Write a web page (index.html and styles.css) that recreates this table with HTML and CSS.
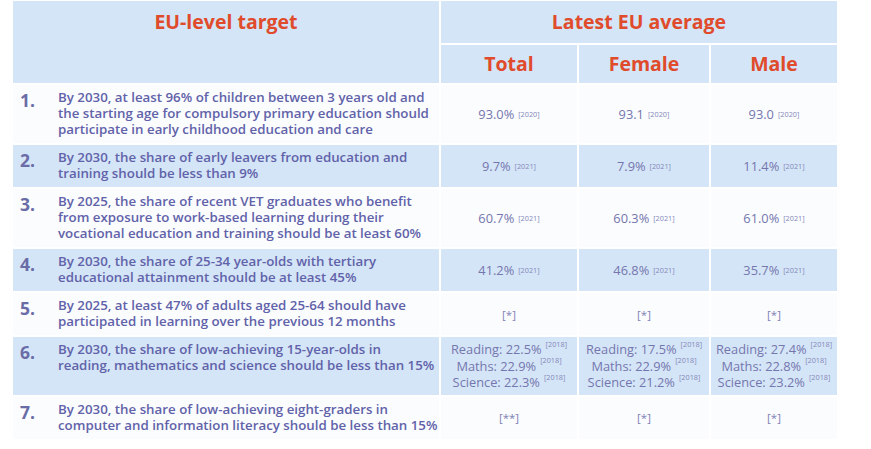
FILE: index.html
```html
<!DOCTYPE html>
<html lang="en">
<head>
<meta charset="utf-8">
<title>EU-level targets</title>
<link rel="stylesheet" href="styles.css">
</head>
<body>
<div class="table">
  <div class="hcell h-target">EU-level target</div>
  <div class="hcell h-avg">Latest EU average</div>
  <div class="hcell h-sub">Total</div>
  <div class="hcell h-sub">Female</div>
  <div class="hcell h-sub">Male</div>

  <div class="cell target"><span class="num">1.</span><span class="txt">By 2030, at least 96% of children between 3 years old and<br>the starting age for compulsory primary education should<br>participate in early childhood education and care</span></div>
  <div class="cell val">93.0%<sup class="yr">[2020]</sup></div>
  <div class="cell val">93.1<sup class="yr">[2020]</sup></div>
  <div class="cell val">93.0<sup class="yr">[2020]</sup></div>

  <div class="cell target blue"><span class="num">2.</span><span class="txt">By 2030, the share of early leavers from education and<br>training should be less than 9%</span></div>
  <div class="cell val blue">9.7%<sup class="yr">[2021]</sup></div>
  <div class="cell val blue">7.9%<sup class="yr">[2021]</sup></div>
  <div class="cell val blue">11.4%<sup class="yr">[2021]</sup></div>

  <div class="cell target"><span class="num">3.</span><span class="txt">By 2025, the share of recent VET graduates who benefit<br>from exposure to work-based learning during their<br>vocational education and training should be at least 60%</span></div>
  <div class="cell val">60.7%<sup class="yr">[2021]</sup></div>
  <div class="cell val">60.3%<sup class="yr">[2021]</sup></div>
  <div class="cell val">61.0%<sup class="yr">[2021]</sup></div>

  <div class="cell target blue"><span class="num">4.</span><span class="txt">By 2030, the share of 25-34 year-olds with tertiary<br>educational attainment should be at least 45%</span></div>
  <div class="cell val blue">41.2%<sup class="yr">[2021]</sup></div>
  <div class="cell val blue">46.8%<sup class="yr">[2021]</sup></div>
  <div class="cell val blue">35.7%<sup class="yr">[2021]</sup></div>

  <div class="cell target"><span class="num">5.</span><span class="txt">By 2025, at least 47% of adults aged 25-64 should have<br>participated in learning over the previous 12 months</span></div>
  <div class="cell val note">[*]</div>
  <div class="cell val note">[*]</div>
  <div class="cell val note">[*]</div>

  <div class="cell target blue"><span class="num">6.</span><span class="txt">By 2030, the share of low-achieving 15-year-olds in<br>reading, mathematics and science should be less than 15%</span></div>
  <div class="cell val blue multi"><span>Reading: 22.5%<sup class="yr">[2018]</sup></span><span>Maths: 22.9%<sup class="yr">[2018]</sup></span><span>Science: 22.3%<sup class="yr">[2018]</sup></span></div>
  <div class="cell val blue multi"><span>Reading: 17.5%<sup class="yr">[2018]</sup></span><span>Maths: 22.9%<sup class="yr">[2018]</sup></span><span>Science: 21.2%<sup class="yr">[2018]</sup></span></div>
  <div class="cell val blue multi"><span>Reading: 27.4%<sup class="yr">[2018]</sup></span><span>Maths: 22.8%<sup class="yr">[2018]</sup></span><span>Science: 23.2%<sup class="yr">[2018]</sup></span></div>

  <div class="cell target"><span class="num">7.</span><span class="txt">By 2030, the share of low-achieving eight-graders in<br>computer and information literacy should be less than 15%</span></div>
  <div class="cell val note">[**]</div>
  <div class="cell val note">[*]</div>
  <div class="cell val note">[*]</div>
</div>
</body>
</html>
```

FILE: styles.css
```css
html, body {
  margin: 0;
  padding: 0;
  background: #ffffff;
}

body {
  font-family: "Open Sans", "Noto Sans", sans-serif;
}

.table {
  display: grid;
  grid-template-columns: 426px 136px 130px 126px;
  grid-template-rows: 42px 38px;
  gap: 2px;
  margin: 1px 0 0 13px;
  width: max-content;
}

.hcell {
  background: #d4e5f7;
  color: #e04b2b;
  font-weight: 700;
  font-size: 19.5px;
  text-align: center;
}

.h-target {
  grid-row: 1 / span 2;
  line-height: 42px;
}

.h-avg {
  grid-column: 2 / span 3;
  line-height: 42px;
}

.h-sub {
  line-height: 38px;
}

.cell {
  background: #fbfcfe;
}

.cell.blue {
  background: #d4e5f7;
}

.target {
  display: flex;
  padding: 4px 6px 6px 7px;
  color: #6162a9;
}

.num {
  width: 38px;
  flex: none;
  font-size: 17.5px;
  font-weight: 700;
  line-height: 22px;
  color: #6a6ca7;
}

.txt {
  font-size: 13.3px;
  font-weight: 600;
  line-height: 16px;
  white-space: nowrap;
}

.val {
  display: flex;
  align-items: center;
  justify-content: center;
  font-size: 12.8px;
  color: #7476ae;
  white-space: nowrap;
}

.multi {
  flex-direction: column;
  line-height: 16.5px;
  padding: 4px 0;
}

.yr {
  font-size: 7.3px;
  vertical-align: 7.5px;
  line-height: 0;
  margin-left: 4px;
  color: #8587b9;
}

.note {
  font-size: 11.5px;
  color: #7f81b6;
}
```
